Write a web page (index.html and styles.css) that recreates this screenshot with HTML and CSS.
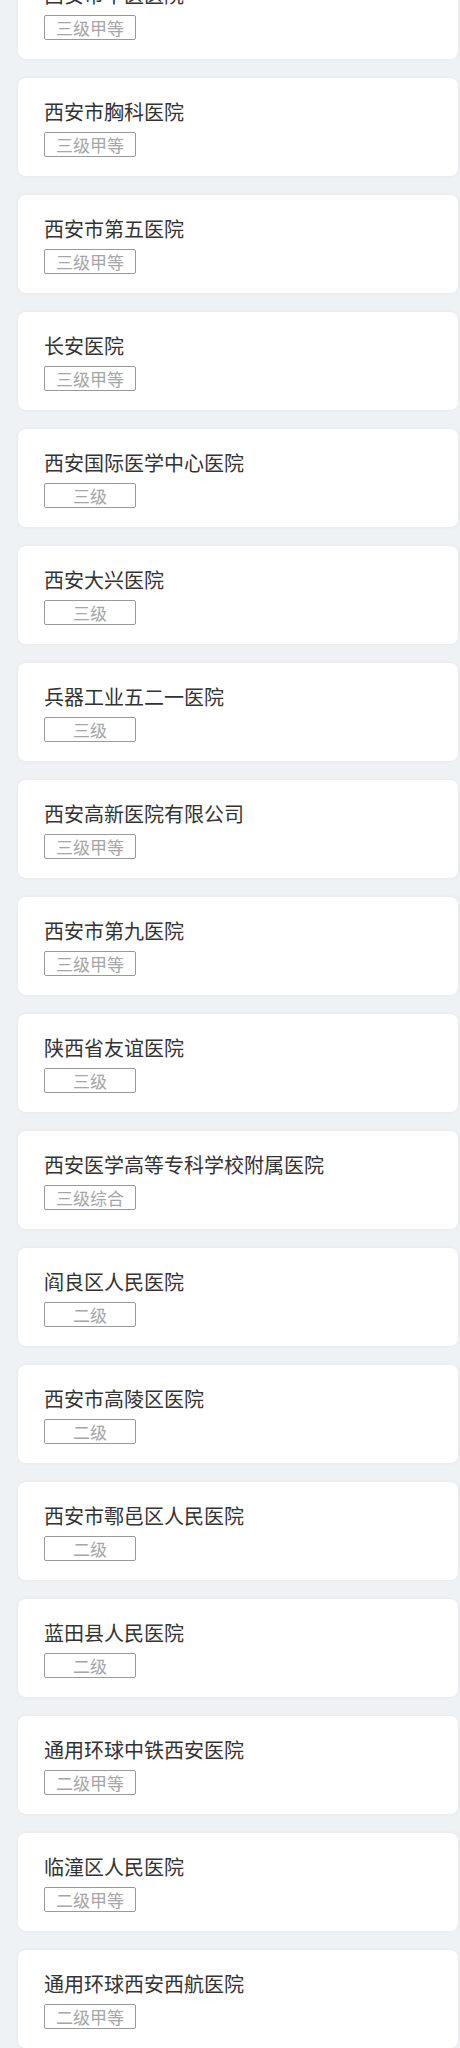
FILE: index.html
```html
<!DOCTYPE html>
<html lang="zh-CN">
<head>
<meta charset="utf-8">
<title>医院列表</title>
<link rel="stylesheet" href="styles.css">
</head>
<body>
<div class="list">
  <div class="card"><div class="name">西安市中医医院</div><div class="tag">三级甲等</div></div>
  <div class="card"><div class="name">西安市胸科医院</div><div class="tag">三级甲等</div></div>
  <div class="card"><div class="name">西安市第五医院</div><div class="tag">三级甲等</div></div>
  <div class="card"><div class="name">长安医院</div><div class="tag">三级甲等</div></div>
  <div class="card"><div class="name">西安国际医学中心医院</div><div class="tag">三级</div></div>
  <div class="card"><div class="name">西安大兴医院</div><div class="tag">三级</div></div>
  <div class="card"><div class="name">兵器工业五二一医院</div><div class="tag">三级</div></div>
  <div class="card"><div class="name">西安高新医院有限公司</div><div class="tag">三级甲等</div></div>
  <div class="card"><div class="name">西安市第九医院</div><div class="tag">三级甲等</div></div>
  <div class="card"><div class="name">陕西省友谊医院</div><div class="tag">三级</div></div>
  <div class="card"><div class="name">西安医学高等专科学校附属医院</div><div class="tag">三级综合</div></div>
  <div class="card"><div class="name">阎良区人民医院</div><div class="tag">二级</div></div>
  <div class="card"><div class="name">西安市高陵区医院</div><div class="tag">二级</div></div>
  <div class="card"><div class="name">西安市鄠邑区人民医院</div><div class="tag">二级</div></div>
  <div class="card"><div class="name">蓝田县人民医院</div><div class="tag">二级</div></div>
  <div class="card"><div class="name">通用环球中铁西安医院</div><div class="tag">二级甲等</div></div>
  <div class="card"><div class="name">临潼区人民医院</div><div class="tag">二级甲等</div></div>
  <div class="card"><div class="name">通用环球西安西航医院</div><div class="tag">二级甲等</div></div>
</div>
</body>
</html>
```
FILE: styles.css
```css
html, body {
  margin: 0;
  padding: 0;
  background: #eef2f5;
  font-family: "Noto Sans CJK SC", "Microsoft YaHei", sans-serif;
}
body {
  overflow: hidden;
  height: 2048px;
}
.list {
  display: flex;
  flex-direction: column;
  gap: 19px;
  margin-top: -39px;
  padding: 0 2px 0 18px;
}
.card {
  background: #ffffff;
  border-radius: 8px;
  box-shadow: 0 0 4px rgba(0, 0, 0, 0.05);
  padding: 20px 26px 19px;
  height: 98px;
  box-sizing: border-box;
  display: flex;
  flex-direction: column;
  align-items: flex-start;
  gap: 6px;
}
.name {
  font-size: 20px;
  line-height: 28px;
  color: #333333;
}
.tag {
  width: 92px;
  height: 25px;
  box-sizing: border-box;
  border: 1px solid #999999;
  border-radius: 2px;
  font-size: 17px;
  line-height: 23px;
  color: #a6a6a6;
  text-align: center;
}
```
